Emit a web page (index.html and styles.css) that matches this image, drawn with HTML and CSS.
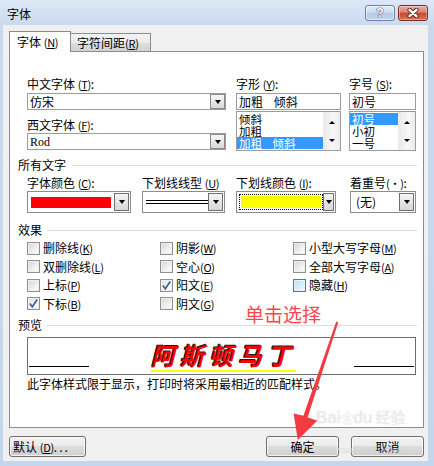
FILE: index.html
```html
<!DOCTYPE html>
<html lang="zh-CN">
<head>
<meta charset="utf-8">
<title>字体</title>
<link rel="stylesheet" href="styles.css">
</head>
<body>
<div class="window">
  <div class="titlebar">
    <span class="title">字体</span>
    <div class="caps">
      <span class="cap help">?</span>
      <span class="cap close"><svg width="14" height="10" viewBox="0 0 14 10"><path d="M3.5 1.8 L10.5 8.2 M10.5 1.8 L3.5 8.2" stroke="#5b2219" stroke-width="4.2" stroke-linecap="round"/><path d="M3.5 1.8 L10.5 8.2 M10.5 1.8 L3.5 8.2" stroke="#fff" stroke-width="2.4" stroke-linecap="round"/></svg></span>
    </div>
  </div>
  <div class="client">
    <div class="tabs">
      <div class="tab active">字体 <span class="ak">(<u>N</u>)</span></div>
      <div class="tab inactive">字符间距<span class="ak">(<u>R</u>)</span></div>
    </div>
    <div class="panel">
      <div class="fontrow">
        <div class="col col-font">
          <div class="lbl">中文字体 <span class="ak">(<u>T</u>)</span>:</div>
          <div class="combo"><span class="val">仿宋</span><span class="ddb"><i class="tri"></i></span></div>
          <div class="lbl lbl2">西文字体 <span class="ak">(<u>F</u>)</span>:</div>
          <div class="combo combo2"><span class="val serif">Rod</span><span class="ddb"><i class="tri"></i></span></div>
        </div>
        <div class="col col-style">
          <div class="lbl">字形 <span class="ak">(<u>Y</u>)</span>:</div>
          <div class="edit"><span class="wsp">加粗 倾斜</span></div>
          <div class="list">
            <div class="items">
              <div class="item">倾斜</div>
              <div class="item">加粗</div>
              <div class="item sel"><span class="wsp">加粗 倾斜</span></div>
            </div>
            <div class="vscroll"><i class="up"></i><i class="tri"></i></div>
          </div>
        </div>
        <div class="col col-size">
          <div class="lbl">字号 <span class="ak">(<u>S</u>)</span>:</div>
          <div class="edit">初号</div>
          <div class="list">
            <div class="items">
              <div class="item sel">初号</div>
              <div class="item">小初</div>
              <div class="item">一号</div>
            </div>
            <div class="vscroll"><i class="up"></i><i class="tri"></i></div>
          </div>
        </div>
      </div>

      <div class="ghdr ghdr1"><span>所有文字</span><i class="gline"></i></div>

      <div class="colorrow">
        <div class="ccol">
          <div class="lbl">字体颜色 <span class="ak">(<u>C</u>)</span>:</div>
          <div class="ccombo w-fc"><span class="swatch red"></span><span class="cbtn"><i class="tri"></i></span></div>
        </div>
        <div class="ccol">
          <div class="lbl">下划线线型 <span class="ak">(<u>U</u>)</span></div>
          <div class="ccombo w-ut"><span class="dbl"><i></i><i></i></span><span class="cbtn"><i class="tri"></i></span></div>
        </div>
        <div class="ccol">
          <div class="lbl">下划线颜色 <span class="ak">(<u>I</u>)</span>:</div>
          <div class="ccombo w-uc"><span class="focus"><span class="swatch yellow"></span></span><span class="cbtn"><i class="tri"></i></span></div>
        </div>
        <div class="ccol">
          <div class="lbl">着重号<span class="ak">(·)</span>:</div>
          <div class="ccombo w-em"><span class="cval">(无)</span><span class="cbtn"><i class="tri"></i></span></div>
        </div>
      </div>

      <div class="ghdr ghdr2"><span>效果</span><i class="gline"></i></div>

      <div class="effects">
        <div class="chk"><i class="cb"></i>删除线 <span class="ak">(<u>K</u>)</span></div>
        <div class="chk"><i class="cb"></i>阴影 <span class="ak">(<u>W</u>)</span></div>
        <div class="chk"><i class="cb"></i>小型大写字母 <span class="ak">(<u>M</u>)</span></div>
        <div class="chk"><i class="cb"></i>双删除线 <span class="ak">(<u>L</u>)</span></div>
        <div class="chk"><i class="cb"></i>空心 <span class="ak">(<u>O</u>)</span></div>
        <div class="chk"><i class="cb"></i>全部大写字母 <span class="ak">(<u>A</u>)</span></div>
        <div class="chk"><i class="cb"></i>上标 <span class="ak">(<u>P</u>)</span></div>
        <div class="chk"><i class="cb on"><svg width="11" height="11" viewBox="0 0 11 11"><path d="M1.8 5.6 L4.3 8.8 L9.2 1.6" fill="none" stroke="#3d5e9f" stroke-width="1.7"/></svg></i>阳文 <span class="ak">(<u>E</u>)</span></div>
        <div class="chk"><i class="cb hover"></i>隐藏 <span class="ak">(<u>H</u>)</span></div>
        <div class="chk"><i class="cb on"><svg width="11" height="11" viewBox="0 0 11 11"><path d="M1.8 5.6 L4.3 8.8 L9.2 1.6" fill="none" stroke="#3d5e9f" stroke-width="1.7"/></svg></i>下标 <span class="ak">(<u>B</u>)</span></div>
        <div class="chk"><i class="cb"></i>阴文 <span class="ak">(<u>G</u>)</span></div>
      </div>

      <div class="ghdr ghdr3"><span>预览</span><i class="gline"></i></div>

      <div class="preview">
        <i class="pline"></i>
        <span class="sample">阿斯顿马丁</span>
        <i class="pline"></i>
      </div>
      <div class="note">此字体样式限于显示，打印时将采用最相近的匹配样式。</div>
    </div>
    <div class="btnrow">
      <div class="btn btn-def">默认 <span class="ak">(<u>D</u>)</span><span class="dots">...</span></div>
      <div class="spacer"></div>
      <div class="btn btn-ok">确定</div>
      <div class="btn btn-cancel">取消</div>
    </div>
  </div>

  <div class="annot">单击选择</div>
  <svg class="arrow" width="434" height="466" viewBox="0 0 434 466">
    <polygon points="336.3,321.6 303.4,415.8 293.6,413.4 297.8,440 317.4,420.6 307.6,417.4 338.2,322.4" fill="#f23a3f"/>
  </svg>
  <div class="watermark">
    <div class="wm1">Bai<span class="paw">❀</span>du<span class="wmcn">经验</span></div>
    <div class="wm2">jingyan.baidu.com</div>
  </div>
</div>
</body>
</html>
```

FILE: styles.css
```css
* { box-sizing: border-box; }
html, body { margin: 0; padding: 0; }
body {
  width: 434px;
  height: 466px;
  overflow: hidden;
  background: #c8d9ee;
  font-family: "Noto Sans CJK SC", sans-serif;
  font-size: 12px;
  color: #000;
}
i { font-style: normal; display: block; }
u { text-decoration: underline; text-underline-offset: 1px; }

.window {
  position: relative;
  width: 434px;
  height: 466px;
  display: flex;
  flex-direction: column;
  background: linear-gradient(#dde8f6 0, #c9daef 25px, #c4d6ec 100%);
}

/* title bar */
.titlebar {
  height: 25px;
  display: flex;
  align-items: flex-start;
  padding: 0 6px 0 7px;
}
.title {
  flex: 1;
  line-height: 14px;
  margin-top: 7px;
  color: #000;
}
.caps { display: flex; gap: 3px; margin-top: 5px; }
.cap {
  width: 30px;
  height: 16px;
  border-radius: 3px;
  display: flex;
  align-items: center;
  justify-content: center;
}
.help {
  border: 1px solid #6d82a0;
  background: linear-gradient(#e4edf8 0, #cddcee 45%, #b4c9e3 50%, #c2d4ea 100%);
  box-shadow: inset 0 0 0 1px rgba(255,255,255,.55);
  font-family: "Liberation Sans", sans-serif;
  font-weight: bold;
  font-size: 13px;
  line-height: 14px;
  color: #fff;
  text-shadow: 0 0 1px #3b4d66, 0 0 1px #3b4d66, 0 0 1px #3b4d66;
}
.close {
  border: 1px solid #7b2d23;
  background: linear-gradient(#eab0a5 0, #dc806d 45%, #c8452f 50%, #d9735c 100%);
  box-shadow: inset 0 0 0 1px rgba(255,255,255,.35);
}

/* client area */
.client {
  flex: 1;
  margin: 0 6px 5px 3px;
  background: #f0f0f0;
  padding: 6px 4px 0 6px;
  display: flex;
  flex-direction: column;
}
.ak { font-size: 11px; letter-spacing: -0.3px; }

.tabs { display: flex; align-items: flex-end; height: 20px; }
.tab {
  border: 1px solid #898c95;
  border-bottom: none;
  line-height: 14px;
}
.tab.active {
  width: 62px;
  height: 21px;
  margin-bottom: -1px;
  background: #fff;
  padding: 3px 0 0 7px;
  position: relative;
  z-index: 1;
}
.tab.inactive {
  width: 80px;
  height: 18px;
  border-left: none;
  padding: 2px 0 0 6px;
  background: linear-gradient(#f3f3f3 0, #ebebeb 50%, #dedede 51%, #d2d2d2 100%);
}

.panel {
  height: 377px;
  border: 1px solid #898c95;
  background: #fff;
  padding: 0 6px 0 17px;
}
.lbl { line-height: 14px; height: 14px; white-space: nowrap; }

/* font row */
.fontrow { display: flex; margin-top: 25px; }
.col { display: flex; flex-direction: column; }
.col-font { width: 199px; margin-right: 10px; }
.col-style { width: 105px; margin-right: 8px; }
.col-size { width: 67px; }

.combo {
  margin-top: 2px;
  height: 17px;
  border: 1px solid #9c9c9c;
  background: #fff;
  display: flex;
  align-items: center;
}
.lbl2 { margin-top: 8px; }
.combo2 { margin-top: 1px; }
.combo .val { flex: 1; padding-left: 2px; line-height: 14px; }
.serif { font-family: "Liberation Serif", serif; font-size: 12px; }
.ddb {
  width: 15px;
  height: 15px;
  border: 1px solid #8a8a8a;
  background: linear-gradient(#f7f7f7, #d9d9d9);
  display: flex;
  align-items: center;
  justify-content: center;
}
.tri {
  width: 0; height: 0;
  border-left: 3.5px solid transparent;
  border-right: 3.5px solid transparent;
  border-top: 4px solid #000;
}
.up {
  width: 0; height: 0;
  border-left: 3.5px solid transparent;
  border-right: 3.5px solid transparent;
  border-bottom: 4px solid #000;
}

.edit {
  margin-top: 2px;
  height: 17px;
  border: 1px solid #9c9c9c;
  background: #fff;
  padding-left: 2px;
  line-height: 15px;
}
.wsp { word-spacing: 8px; }
.list {
  margin-top: 1px;
  height: 40px;
  border: 1px solid #9c9c9c;
  background: #fff;
  display: flex;
  overflow: hidden;
}
.items { flex: 1; padding-top: 1px; }
.item { font-size: 11.5px; line-height: 12px; height: 12px; padding-left: 2px; white-space: nowrap; }
.item.sel { background: #3399ff; color: #fff; }
.vscroll {
  width: 17px;
  background: linear-gradient(90deg, #e9e9e9, #f7f7f7 60%, #ececec);
  display: flex;
  flex-direction: column;
  align-items: center;
  justify-content: space-between;
  padding: 9px 0 8px;
}
.vscroll .up, .vscroll .tri { border-left-width: 3px; border-right-width: 3px; }
.vscroll .up { border-bottom-width: 3px; }
.vscroll .tri { border-top-width: 3px; }

/* group headers */
.ghdr {
  display: flex;
  align-items: center;
  margin-left: -9px;
  margin-right: 0;
  height: 14px;
  line-height: 14px;
}
.ghdr span { white-space: nowrap; }
.gline { flex: 1; height: 1px; background: #d5dfe5; margin-left: 6px; }
.ghdr2 .gline, .ghdr3 .gline { margin-left: 5px; }
.ghdr1 { margin-top: 7px; }
.ghdr2 { margin-top: 10px; }
.ghdr3 { margin-top: 5px; }

/* colour row */
.colorrow { display: grid; grid-template-columns: 115px 94px 114px 66px; margin-top: 4px; }
.ccombo {
  margin-top: 1px;
  height: 22px;
  border: 1px solid #8c8c8c;
  background: #fff;
  display: flex;
  align-items: center;
  padding-left: 3px;
}
.w-fc { width: 104px; }
.w-ut { width: 83px; }
.w-uc { width: 100px; }
.w-em { width: 66px; }
.swatch { display: block; height: 11px; }
.swatch.red { width: 80px; background: #ff0000; }
.swatch.yellow { width: 80px; height: 12px; background: #ffff00; }
.focus { padding: 1px; border: 1px dotted #000; margin-left: -1px; }
.cbtn {
  margin-left: auto;
  margin-right: 1px;
  width: 15px;
  height: 18px;
  border: 1px solid #6f6f6f;
  background: linear-gradient(#f5f5f5, #d6d6d6);
  display: flex;
  align-items: center;
  justify-content: center;
}
.dbl { display: flex; flex-direction: column; gap: 2px; width: 64px; }
.dbl i { height: 1px; background: #000; }
.dbl i:first-child { height: 1.5px; }
.cval { padding-left: 2px; line-height: 14px; }

/* effects */
.effects {
  display: grid;
  grid-template-columns: 133px 133px 1fr;
  grid-auto-rows: 18.5px;
  margin-top: 2px;
}
.chk { display: flex; align-items: center; white-space: nowrap; line-height: 14px; }
.cb {
  width: 13px;
  height: 13px;
  margin-right: 3px;
  border: 1px solid #8e8f8f;
  background: linear-gradient(135deg, #d3d3d3, #f6f6f6 70%, #fdfdfd);
  box-shadow: inset 0 0 0 1px #f0f0f0;
  display: flex;
  align-items: center;
  justify-content: center;
}
.cb.on { background: linear-gradient(135deg, #e2e2e2, #fafafa 70%, #ffffff); }
.cb.hover {
  border-color: #3c7fb1;
  background: linear-gradient(135deg, #b1dffa, #def3fd 70%, #ecf8fe);
  box-shadow: inset 0 0 0 1px #e5f4fd;
}

/* preview */
.preview {
  margin-top: 5px;
  width: 389px;
  height: 38px;
  border: 1px solid #6e6e6e;
  display: flex;
  align-items: flex-start;
  justify-content: space-between;
  padding: 0 1px;
}
.pline { width: 60px; height: 1px; background: #000; margin-top: 28px; }
.sample {
  margin-top: 3px;
  margin-left: 4px;
  font-size: 24px;
  line-height: 28px;
  height: 31px;
  font-weight: 700;
  font-style: italic;
  letter-spacing: 5px;
  color: #ff0000;
  text-shadow: -1px -1px 0 #1e1e1e, -1px 0 0 #1e1e1e;
  border-bottom: 2px solid #ffff00;
}
.note { margin-top: 2px; line-height: 14px; white-space: nowrap; }

/* buttons */
.btnrow { display: flex; margin-top: 8px; height: 21px; gap: 12px; }
.spacer { flex: 1; }
.btn {
  height: 21px;
  border: 1px solid #707070;
  border-radius: 3px;
  background: linear-gradient(#f2f2f2 0, #ebebeb 45%, #dddddd 50%, #cfcfcf 100%);
  box-shadow: inset 0 0 0 1px rgba(255,255,255,.7);
  line-height: 19px;
  text-align: center;
}
.btn-def { width: 77px; text-align: left; padding-left: 3px; }
.dots { letter-spacing: 2px; }
.btn-ok, .btn-cancel { width: 73px; }

/* overlays */
.annot {
  position: absolute;
  left: 245px;
  top: 303px;
  font-size: 19px;
  line-height: 22px;
  color: #f5474c;
  white-space: nowrap;
}
.arrow { position: absolute; left: 0; top: 0; pointer-events: none; }
.watermark {
  position: absolute;
  left: 316px;
  top: 407px;
  color: rgba(255,255,255,.55);
  text-shadow: 0 0 1px rgba(110,110,110,.35);
  pointer-events: none;
}
.wm1 { font-family: "Liberation Sans", sans-serif; font-size: 17px; line-height: 20px; white-space: nowrap; }
.paw { font-size: 13px; }
.wmcn { font-family: "Noto Sans CJK SC", sans-serif; font-size: 15px; margin-left: 3px; }
.wm2 { font-family: "Liberation Serif", serif; font-size: 11px; line-height: 13px; margin-left: 4px; margin-top: 14px; }
```
